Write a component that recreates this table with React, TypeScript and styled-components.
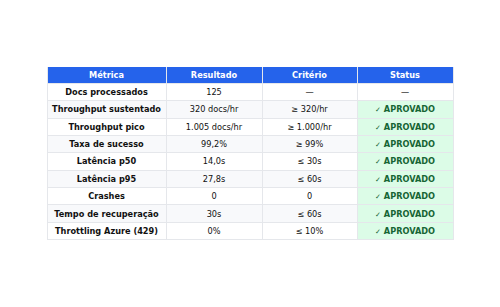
import styled, { createGlobalStyle } from 'styled-components';

const GlobalStyle = createGlobalStyle`
  html, body {
    margin: 0;
    padding: 0;
    background: #fff;
  }
  body {
    font-family: 'DejaVu Sans', Verdana, sans-serif;
  }
`;

const Page = styled.div`
  width: 500px;
  height: 307px;
  display: flex;
  align-items: center;
  justify-content: center;
`;

const Table = styled.table`
  width: 406px;
  border-collapse: collapse;
  table-layout: fixed;
  font-size: 8.2px;
  color: #111;
`;

const HeadCell = styled.th`
  background: #2563eb;
  color: #fff;
  font-weight: bold;
  height: 16px;
  padding: 0 4px;
  text-align: center;
  border: 1px solid #e5e7eb;
  border-top: none;
`;

const Row = styled.tr<{ $alt: boolean }>`
  background: ${(p) => (p.$alt ? '#f8f9fb' : '#fff')};
`;

const Cell = styled.td<{ $bold?: boolean }>`
  height: 16.4px;
  padding: 0 4px;
  text-align: center;
  border: 1px solid #e5e7eb;
  font-weight: ${(p) => (p.$bold ? 'bold' : 'normal')};
  white-space: nowrap;
`;

const StatusCell = styled(Cell)<{ $ok: boolean }>`
  background: ${(p) => (p.$ok ? '#dcfce7' : 'transparent')};
  color: ${(p) => (p.$ok ? '#166534' : '#111')};
  font-weight: ${(p) => (p.$ok ? 'bold' : 'normal')};
`;

const Check = styled.span`
  font-weight: normal;
  font-size: 7px;
  margin-right: 3px;
`;

const rows = [
  ['Docs processados', '125', '—', ''],
  ['Throughput sustentado', '320 docs/hr', '≥ 320/hr', 'ok'],
  ['Throughput pico', '1.005 docs/hr', '≥ 1.000/hr', 'ok'],
  ['Taxa de sucesso', '99,2%', '≥ 99%', 'ok'],
  ['Latência p50', '14,0s', '≤ 30s', 'ok'],
  ['Latência p95', '27,8s', '≤ 60s', 'ok'],
  ['Crashes', '0', '0', 'ok'],
  ['Tempo de recuperação', '30s', '≤ 60s', 'ok'],
  ['Throttling Azure (429)', '0%', '≤ 10%', 'ok'],
];

export default function App() {
  return (
    <Page>
      <GlobalStyle />
      <Table>
        <colgroup>
          <col style={{ width: 119 }} />
          <col style={{ width: 96 }} />
          <col style={{ width: 95 }} />
          <col style={{ width: 96 }} />
        </colgroup>
        <thead>
          <tr>
            <HeadCell>Métrica</HeadCell>
            <HeadCell>Resultado</HeadCell>
            <HeadCell>Critério</HeadCell>
            <HeadCell>Status</HeadCell>
          </tr>
        </thead>
        <tbody>
          {rows.map(([m, r, c, s], i) => (
            <Row key={m} $alt={i % 2 === 1}>
              <Cell $bold>{m}</Cell>
              <Cell>{r}</Cell>
              <Cell>{c}</Cell>
              <StatusCell $ok={s === 'ok'}>
                {s === 'ok' ? (
                  <>
                    <Check>✓</Check>APROVADO
                  </>
                ) : (
                  '—'
                )}
              </StatusCell>
            </Row>
          ))}
        </tbody>
      </Table>
    </Page>
  );
}
